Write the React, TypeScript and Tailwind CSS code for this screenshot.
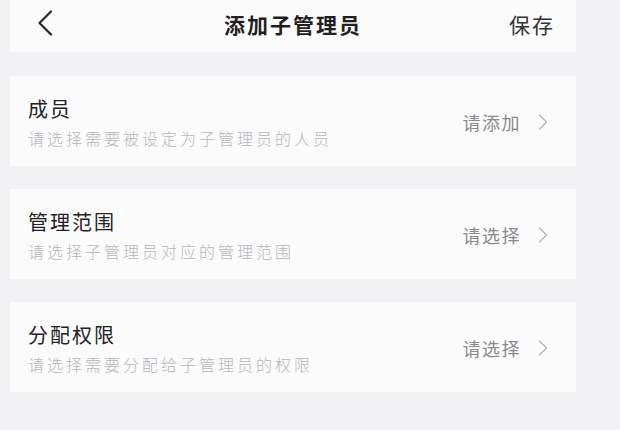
import React from 'react'

const font = { fontFamily: '"Noto Sans CJK SC", "Noto Sans", sans-serif' }

interface Row {
  title: string
  hint: string
  action: string
}

const rows: Row[] = [
  { title: '成员', hint: '请选择需要被设定为子管理员的人员', action: '请添加' },
  { title: '管理范围', hint: '请选择子管理员对应的管理范围', action: '请选择' },
  { title: '分配权限', hint: '请选择需要分配给子管理员的权限', action: '请选择' },
]

function ChevronRight() {
  return (
    <svg width="10" height="16" viewBox="0 0 10 16" fill="none">
      <polyline points="1.5,1 8.5,8 1.5,15" stroke="#b4b4b8" strokeWidth="1.3" strokeLinecap="round" strokeLinejoin="round" />
    </svg>
  )
}

export default function App() {
  return (
    <div className="w-[620px] h-[430px] bg-[#f2f2f4] overflow-hidden" style={font}>
      <div className="ml-[10px] w-[566px] flex flex-col gap-[23px]">
        {/* top bar */}
        <div className="h-[52px] bg-[#fbfbfc] flex items-center justify-between pl-[27px] pr-[21px] relative">
          <svg width="16" height="26" viewBox="0 0 16 26" fill="none" className="-mt-[6px]">
            <polyline points="14,1.5 2.5,13 14,24.5" stroke="#26262a" strokeWidth="2.2" strokeLinecap="round" strokeLinejoin="round" />
          </svg>
          <div className="absolute left-0 right-0 top-0 h-[48px] flex items-center justify-center pointer-events-none">
            <span className="text-[21px] leading-[24px] font-bold text-[#1f1f22] tracking-[2px]">添加子管理员</span>
          </div>
          <span className="text-[21px] leading-[24px] text-[#333336] tracking-[2px] -mt-[4px]">保存</span>
        </div>

        {rows.map((r, i) => (
          <div key={i} className={'h-[90px] bg-[#fbfbfc] flex items-center justify-between pl-[18px] pr-[28px]' + (i === 0 ? ' mt-[1px]' : '')}>
            <div className="flex flex-col pt-[4px]">
              <div className="text-[20px] leading-[22px] text-[#222225] tracking-[2px]">{r.title}</div>
              <div className="text-[16px] leading-[20px] font-light text-[#b6b6ba] tracking-[3px] mt-[8px]">{r.hint}</div>
            </div>
            <div className="flex items-center gap-[17px] pt-[2px]">
              <span className="text-[18px] leading-[22px] text-[#8a8a8e] tracking-[1.5px]">{r.action}</span>
              <ChevronRight />
            </div>
          </div>
        ))}
      </div>
    </div>
  )
}
